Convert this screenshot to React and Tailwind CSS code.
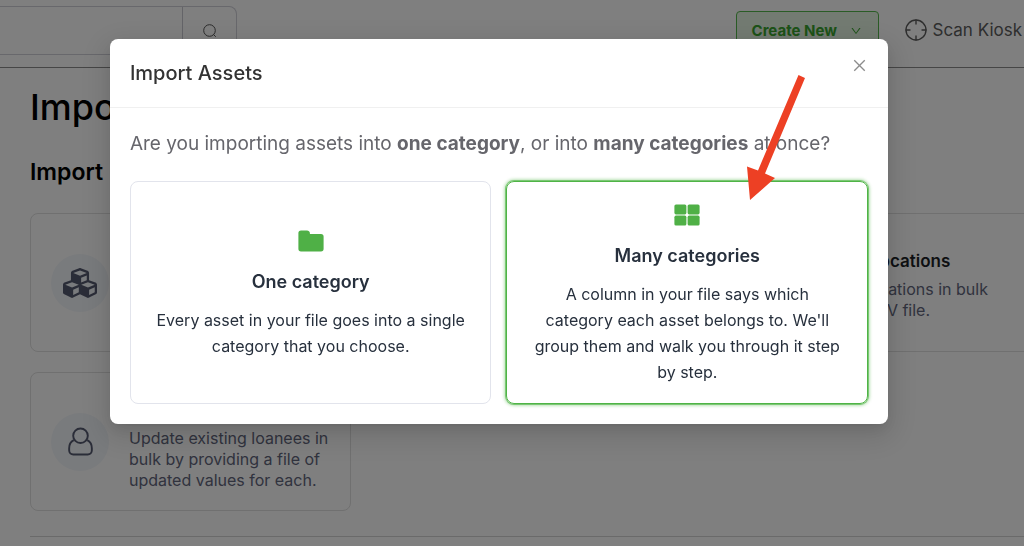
import clsx from 'clsx';
import { Crosshair } from 'lucide-react';
import { AiOutlineClose, AiOutlineDown } from 'react-icons/ai';
import { FaCubes } from 'react-icons/fa';

function SearchIcon() {
  return (
    <svg viewBox="0 0 14 14" fill="none" stroke="currentColor" className="h-[14px] w-[14px]">
      <circle cx="6.500" cy="6.500" r="5.800" />
      <path d="M10.700 10.700 12.500 12.500" strokeLinecap="round" />
    </svg>
  );
}

function UserIcon({ className }) {
  return (
    <svg viewBox="0 0 26 30" fill="none" stroke="currentColor" strokeWidth="2" className={className}>
      <circle cx="13" cy="9" r="7.600" />
      <path d="M6 13.500C3 15 1.200 18.200 1.200 22v2.200c0 2.400 1.900 4.300 4.300 4.300h15c2.400 0 4.300-1.900 4.300-4.300V22c0-3.800-1.800-7-4.800-8.500" />
    </svg>
  );
}

function FolderIcon() {
  return (
    <svg viewBox="0 0 26 22" fill="currentColor" className="h-[22px] w-[26px]">
      <path d="M3 .5h6c1.600 0 2.800 1.200 2.900 2.600V4H23a2.600 2.600 0 0 1 2.600 2.600v12.200a2.600 2.600 0 0 1-2.600 2.600H3a2.600 2.600 0 0 1-2.600-2.600V3.100A2.600 2.600 0 0 1 3 .5z" />
    </svg>
  );
}

function GridIcon() {
  return (
    <svg viewBox="0 0 26 22" fill="currentColor" className="h-[22px] w-[26px]">
      <rect x="0.400" y="0.400" width="12" height="10" rx="1.600" />
      <rect x="13.600" y="0.400" width="12" height="10" rx="1.600" />
      <rect x="0.400" y="11.600" width="12" height="10" rx="1.600" />
      <rect x="13.600" y="11.600" width="12" height="10" rx="1.600" />
    </svg>
  );
}

function TopBar() {
  return (
    <header className="flex h-[68px] shrink-0 items-start justify-between border-b border-[#8c8c8c] pr-0.5">
      <div className="mt-[6px] flex h-[49px] w-[237px] rounded-r-lg border border-l-0 border-[#d0d0d8]">
        <input type="text" aria-label="Search" className="min-w-0 flex-1 px-3 text-base outline-none" />
        <button type="button" aria-label="Search" className="flex w-[54px] items-center justify-center border-l border-[#c8c8d0] text-[#555]">
          <SearchIcon />
        </button>
      </div>
      <div className="flex items-start">
        <button
          type="button"
          className="mt-[11px] flex h-10 w-[143px] items-center justify-between rounded border border-[#55b84c] bg-[#e6f6e4] pr-4 pl-[15px] text-[15px] font-bold text-[#3aa52f]"
        >
          Create New
          <AiOutlineDown className="h-3 w-3" />
        </button>
        <a href="#kiosk" className="mt-[18px] ml-[25px] flex items-center gap-[5px] text-[17px] leading-6 text-[#5c5c5c]">
          <Crosshair className="h-6 w-6" strokeWidth={1.4} />
          Scan Kiosk
        </a>
      </div>
    </header>
  );
}

function ImportCard({ icon, title, children }) {
  return (
    <a href="#import" className="flex h-[139px] items-center rounded-lg border border-[#e0e0e0] pr-4 pl-5">
      <span className="mr-5 flex h-[58px] w-[58px] shrink-0 items-center justify-center rounded-full bg-[#f3f6fa] text-[#555a70]">
        {icon}
      </span>
      {title && (
        <span className="block pt-[7px]">
          <span className="mb-[7px] block text-[17px] leading-[21px] font-semibold text-[#1c1f26]">{title}</span>
          <span className="block text-base leading-[21px] text-[#62667c]">{children}</span>
        </span>
      )}
    </a>
  );
}

function ImportPage() {
  return (
    <main className="-mr-[10px] ml-[30px]">
      <h1 className="mt-[17px] text-4xl leading-[44px] font-medium text-black">Import</h1>
      <h2 className="mt-[29px] text-[23px] leading-[28px] font-semibold text-black">Import</h2>
      <div className="mt-[27px] grid grid-cols-3 gap-5">
        <ImportCard icon={<FaCubes className="h-[34px] w-[34px]" />} />
        <ImportCard icon={<UserIcon className="h-[29px] w-[25px]" />} />
        <ImportCard icon={<FaCubes className="h-[34px] w-[34px]" />} title="Import Locations">
          Import locations in bulk from a CSV file.
        </ImportCard>
        <ImportCard icon={<UserIcon className="h-[29px] w-[25px]" />} title="Update Loanees">
          Update existing loanees in bulk by providing a file of updated values for each.
        </ImportCard>
      </div>
      <hr className="mt-[25px] border-[#d4d4d4]" />
    </main>
  );
}

function CategoryOption({ icon, title, selected, children }) {
  return (
    <button
      type="button"
      aria-pressed={selected}
      className={clsx(
        'flex min-h-[223px] flex-col items-center justify-center rounded-lg border px-[25px] pt-[3px] text-center text-[#27303d]',
        selected ? 'border-[#4fb446] shadow-[0_0_0_1px_#4fb446a0,0_0_3px_2px_#4fb44660]' : 'border-[#e2e4ec]'
      )}
    >
      <span className="text-[#4fb046]">{icon}</span>
      <span className="mt-[18px] text-lg leading-6 font-semibold">{title}</span>
      <span className="mt-[13px] text-base leading-[26px]">{children}</span>
    </button>
  );
}

function ImportModal() {
  return (
    <div className="fixed inset-0 flex items-start justify-center bg-black/50">
      <section
        role="dialog"
        aria-modal="true"
        aria-labelledby="import-title"
        className="relative mt-[39px] mr-[26px] w-[76%] rounded-lg bg-white shadow-[0_3px_6px_-4px_rgba(0,0,0,0.12),0_6px_16px_rgba(0,0,0,0.08),0_9px_28px_8px_rgba(0,0,0,0.1)]"
      >
        <header className="flex h-[69px] items-center justify-between border-b border-[#f0f0f0] px-5">
          <h2 id="import-title" className="text-xl leading-7 font-medium text-[#333]">Import Assets</h2>
          <button type="button" aria-label="Close" className="mb-4 text-[#8c8c8c]">
            <AiOutlineClose className="h-[17px] w-[17px]" />
          </button>
        </header>
        <div className="px-5 pt-[22px] pb-5">
          <p className="text-[19px] leading-7 text-[#66666c]">
            Are you importing assets into <strong>one category</strong>, or into <strong>many categories</strong> at once?
          </p>
          <div className="mt-[23px] grid grid-cols-2 gap-[15px]">
            <CategoryOption icon={<FolderIcon />} title="One category">
              Every asset in your file goes into a single category that you choose.
            </CategoryOption>
            <CategoryOption icon={<GridIcon />} title="Many categories" selected>
              A column in your file says which category each asset belongs to. We'll group them and walk you through it step by step.
            </CategoryOption>
          </div>
        </div>
        <svg viewBox="0 0 60 130" fill="#ed4024" aria-hidden="true" className="pointer-events-none absolute top-[34px] right-[82px] h-[130px] w-[60px]">
          <path d="M52.500 2 59 5 19 100.500 29 105 4 127 1 93.500 12 97.500z" />
        </svg>
      </section>
    </div>
  );
}

export default function App() {
  return (
    <div className="flex h-screen flex-col overflow-hidden bg-white font-['Inter','Liberation_Sans',sans-serif]">
      <TopBar />
      <ImportPage />
      <ImportModal />
    </div>
  );
}
